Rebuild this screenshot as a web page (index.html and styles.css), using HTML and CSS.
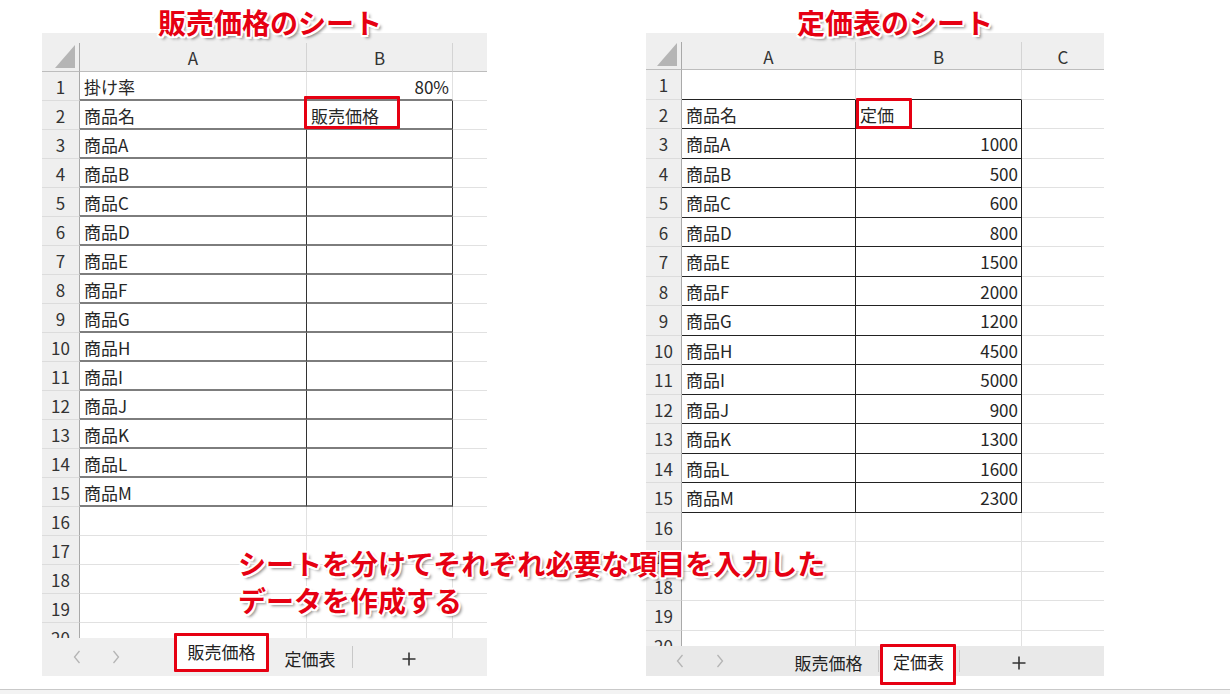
FILE: index.html
```html
<!DOCTYPE html>
<html lang="ja">
<head>
    <meta charset="UTF-8">
    <meta name="viewport" content="width=device-width, initial-scale=1.0">
    <title>販売価格と定価表</title>
    <link rel="stylesheet" href="styles.css">
</head>
<body>

<div class="page">
    <!-- 販売価格のシート -->
    <div class="sheet sheet-left">
        <div class="band"></div>
        <div class="grid">
            <div class="hd corner"></div><div class="hd">A</div><div class="hd">B</div><div class="hd"></div>
            <div class="rh">1</div><div class="tbm">掛け率</div><div class="tbm num">80%</div><div></div>
            <div class="rh">2</div><div class="tr tbm">商品名</div><div class="tr tbm">販売価格<span class="mark mark-b2l"></span></div><div></div>
            <div class="rh">3</div><div class="tr tbm">商品A</div><div class="tr tbm"></div><div></div>
            <div class="rh">4</div><div class="tr tbm">商品B</div><div class="tr tbm"></div><div></div>
            <div class="rh">5</div><div class="tr tbm">商品C</div><div class="tr tbm"></div><div></div>
            <div class="rh">6</div><div class="tr tbm">商品D</div><div class="tr tbm"></div><div></div>
            <div class="rh">7</div><div class="tr tbm">商品E</div><div class="tr tbm"></div><div></div>
            <div class="rh">8</div><div class="tr tbm">商品F</div><div class="tr tbm"></div><div></div>
            <div class="rh">9</div><div class="tr tbm">商品G</div><div class="tr tbm"></div><div></div>
            <div class="rh">10</div><div class="tr tbm">商品H</div><div class="tr tbm"></div><div></div>
            <div class="rh">11</div><div class="tr tbm">商品I</div><div class="tr tbm"></div><div></div>
            <div class="rh">12</div><div class="tr tbm">商品J</div><div class="tr tbm"></div><div></div>
            <div class="rh">13</div><div class="tr tbm">商品K</div><div class="tr tbm"></div><div></div>
            <div class="rh">14</div><div class="tr tbm">商品L</div><div class="tr tbm"></div><div></div>
            <div class="rh">15</div><div class="tr tbm">商品M</div><div class="tr tbm"></div><div></div>
            <div class="rh">16</div><div></div><div></div><div></div>
            <div class="rh">17</div><div></div><div></div><div></div>
            <div class="rh">18</div><div></div><div></div><div></div>
            <div class="rh">19</div><div></div><div></div><div></div>
            <div class="rh">20</div><div></div><div></div><div></div>
        </div>
        <div class="tabbar">
            <div class="nav">
                <svg class="chev" width="8" height="14" viewBox="0 0 8 14"><path d="M6.5 1 L1.5 7 L6.5 13"/></svg>
                <svg class="chev" width="8" height="14" viewBox="0 0 8 14"><path d="M1.5 1 L6.5 7 L1.5 13"/></svg>
            </div>
            <div class="tab active">販売価格<span class="mark"></span></div>
            <div class="tab tab-price">定価表</div>
            <div class="sep"></div>
            <div class="plus">
                <svg width="14" height="14" viewBox="0 0 14 14"><path d="M7 0.5 V13.5 M0.5 7 H13.5"/></svg>
            </div>
        </div>
    </div>

    <!-- 定価表のシート -->
    <div class="sheet sheet-right">
        <div class="band"></div>
        <div class="grid">
            <div class="hd corner"></div><div class="hd">A</div><div class="hd">B</div><div class="hd">C</div>
            <div class="rh">1</div><div class="tbm"></div><div class="tbm"></div><div></div>
            <div class="rh">2</div><div class="tr tbm">商品名</div><div class="tr tbm">定価<span class="mark mark-b2r"></span></div><div></div>
            <div class="rh">3</div><div class="tr tbm">商品A</div><div class="tr tbm num">1000</div><div></div>
            <div class="rh">4</div><div class="tr tbm">商品B</div><div class="tr tbm num">500</div><div></div>
            <div class="rh">5</div><div class="tr tbm">商品C</div><div class="tr tbm num">600</div><div></div>
            <div class="rh">6</div><div class="tr tbm">商品D</div><div class="tr tbm num">800</div><div></div>
            <div class="rh">7</div><div class="tr tbm">商品E</div><div class="tr tbm num">1500</div><div></div>
            <div class="rh">8</div><div class="tr tbm">商品F</div><div class="tr tbm num">2000</div><div></div>
            <div class="rh">9</div><div class="tr tbm">商品G</div><div class="tr tbm num">1200</div><div></div>
            <div class="rh">10</div><div class="tr tbm">商品H</div><div class="tr tbm num">4500</div><div></div>
            <div class="rh">11</div><div class="tr tbm">商品I</div><div class="tr tbm num">5000</div><div></div>
            <div class="rh">12</div><div class="tr tbm">商品J</div><div class="tr tbm num">900</div><div></div>
            <div class="rh">13</div><div class="tr tbm">商品K</div><div class="tr tbm num">1300</div><div></div>
            <div class="rh">14</div><div class="tr tbm">商品L</div><div class="tr tbm num">1600</div><div></div>
            <div class="rh">15</div><div class="tr tbm">商品M</div><div class="tr tbm num">2300</div><div></div>
            <div class="rh">16</div><div></div><div></div><div></div>
            <div class="rh">17</div><div></div><div></div><div></div>
            <div class="rh">18</div><div></div><div></div><div></div>
            <div class="rh">19</div><div></div><div></div><div></div>
            <div class="rh">20</div><div></div><div></div><div></div>
        </div>
        <div class="tabbar">
            <div class="nav">
                <svg class="chev" width="8" height="14" viewBox="0 0 8 14"><path d="M6.5 1 L1.5 7 L6.5 13"/></svg>
                <svg class="chev" width="8" height="14" viewBox="0 0 8 14"><path d="M1.5 1 L6.5 7 L1.5 13"/></svg>
            </div>
            <div class="tab tab-sales">販売価格</div>
            <div class="sep"></div>
            <div class="tab active">定価表<span class="mark"></span></div>
            <div class="sep"></div>
            <div class="plus">
                <svg width="14" height="14" viewBox="0 0 14 14"><path d="M7 0.5 V13.5 M0.5 7 H13.5"/></svg>
            </div>
        </div>
    </div>
</div>

<div class="statusline"></div>

<!-- 注釈 -->
<div class="note note-left">販売価格のシート</div>
<div class="note note-right">定価表のシート</div>
<div class="note note-caption">シートを分けてそれぞれ必要な項目を入力した<br>データを作成する</div>

</body>
</html>
```

FILE: styles.css
```css
body {
    margin: 0;
    width: 1230px;
    height: 694px;
    overflow: hidden;
    position: relative;
    background: #fff;
    font-family: "Noto Sans CJK JP", "Noto Sans", sans-serif;
    color: #262626;
}
.page {
    display: flex;
    align-items: flex-start;
    gap: 159px;
    padding: 33px 0 0 42px;
}
.sheet-left {
    width: 445px;
}
.sheet-right {
    width: 458px;
}
.band {
    background: #efefef;
}
.sheet-left .band {
    height: 10px;
}
.sheet-right .band {
    height: 9px;
}
.grid {
    display: grid;
    overflow: hidden;
    background: #fff;
}
.sheet-left .grid {
    grid-template-columns: 38px 227px 146px 34px;
    grid-template-rows: 29px;
    grid-auto-rows: 29px;
    height: 595px;
}
.sheet-right .grid {
    grid-template-columns: 36px 174px 166px 82px;
    grid-template-rows: 28px;
    grid-auto-rows: 29.5px;
    height: 604px;
}
.grid > div {
    position: relative;
    display: flex;
    align-items: center;
    box-sizing: border-box;
    padding: 1px 4px 0;
    border-right: 1px solid #e1e1e1;
    border-bottom: 1px solid #e1e1e1;
    font-size: 17px;
    white-space: nowrap;
}
.grid > div:nth-child(4n) {
    border-right: none;
}
.grid > .hd {
    justify-content: center;
    background: #efefef;
    border-right-color: #d4d4d4;
    border-bottom-color: #bdbdbd;
    color: #333;
}
.grid > .rh {
    justify-content: center;
    padding: 1px 0 0;
    background: #efefef;
    border-right-color: #a9a9a9;
    border-bottom-color: #dcdcdc;
    color: #333;
}
.grid > .corner {
    border-right-color: #a9a9a9;
}
.corner::after {
    content: "";
    position: absolute;
    right: 4px;
    bottom: 3px;
    width: 20px;
    height: 23px;
    background: #b5b5b5;
    clip-path: polygon(100% 0, 100% 100%, 0 100%);
}
.grid > .num {
    justify-content: flex-end;
    padding-right: 3px;
}
.sheet-left .grid > .tbm {
    border-bottom: 2px solid #7d7d7d;
}
.sheet-left .grid > .tr {
    border-right: 1px solid #333;
}
.sheet-right .grid > .tbm {
    border-bottom: 1px solid #222;
}
.sheet-right .grid > .tr {
    border-right: 1px solid #222;
}

/* 赤枠 */
.mark {
    position: absolute;
    box-sizing: border-box;
    border: 3px solid #e60012;
    border-radius: 1px;
}
.mark-b2l {
    left: -3px;
    top: -5px;
    width: 96px;
    height: 33px;
}
.mark-b2r {
    left: 0;
    top: -1.5px;
    width: 56px;
    height: 31px;
}

/* シート見出し */
.tabbar {
    display: flex;
    align-items: center;
    font-size: 17px;
    color: #222;
}
.sheet-left .tabbar {
    height: 38px;
    background: #efefef;
}
.sheet-right .tabbar {
    height: 30px;
    background: #e9e9e9;
}
.nav {
    display: flex;
    align-items: center;
    gap: 31px;
    width: 133px;
    box-sizing: border-box;
    padding-left: 31px;
}
.sheet-right .nav {
    padding-left: 30px;
    gap: 32px;
}
.chev path {
    fill: none;
    stroke: #b4b4b4;
    stroke-width: 1.3;
}
.tab {
    position: relative;
    display: flex;
    align-items: center;
    justify-content: center;
    box-sizing: border-box;
    height: 100%;
    padding-bottom: 2px;
}
.tab.active {
    align-self: flex-start;
    background: #fff;
}
.tab .mark {
    left: -1px;
    right: -1px;
    top: -1px;
    bottom: -1px;
}
.sheet-left .tab.active {
    width: 93px;
    height: 37px;
    margin-top: -4px;
}
.sheet-left .tab-price {
    width: 84px;
    padding-top: 4px;
}
.sheet-right .tab-sales {
    width: 99px;
    padding-top: 4px;
}
.sheet-right .tab.active {
    width: 73px;
    height: 35px;
    margin: 1px 4px 0 3px;
    padding-bottom: 6px;
}
.sheet-right .tab .mark {
    left: -2px;
    top: -3px;
    bottom: -3px;
}
.sep {
    width: 1px;
    height: 22px;
    background: #c8c8c8;
}
.plus {
    display: flex;
    justify-content: center;
    width: 112px;
    padding-top: 3px;
}
.sheet-right .plus {
    width: 118px;
}
.plus path {
    stroke: #333;
    stroke-width: 1.6;
}

.statusline {
    margin-top: 13px;
    height: 5px;
    border-top: 1px solid #c9c9c9;
    background: #f3f3f3;
}

/* 注釈テキスト */
.note {
    position: absolute;
    color: #e60012;
    font-size: 28px;
    font-weight: 700;
    line-height: 37px;
    white-space: nowrap;
    text-shadow:
        2px 0 #fff, -2px 0 #fff, 0 2px #fff, 0 -2px #fff,
        1.5px 1.5px #fff, -1.5px 1.5px #fff, 1.5px -1.5px #fff, -1.5px -1.5px #fff,
        3px 3px 3px rgba(0, 0, 0, 0.45);
}
.note-left {
    left: 158px;
    top: 4px;
}
.note-right {
    left: 797px;
    top: 4px;
}
.note-caption {
    left: 238px;
    top: 545px;
}
```
